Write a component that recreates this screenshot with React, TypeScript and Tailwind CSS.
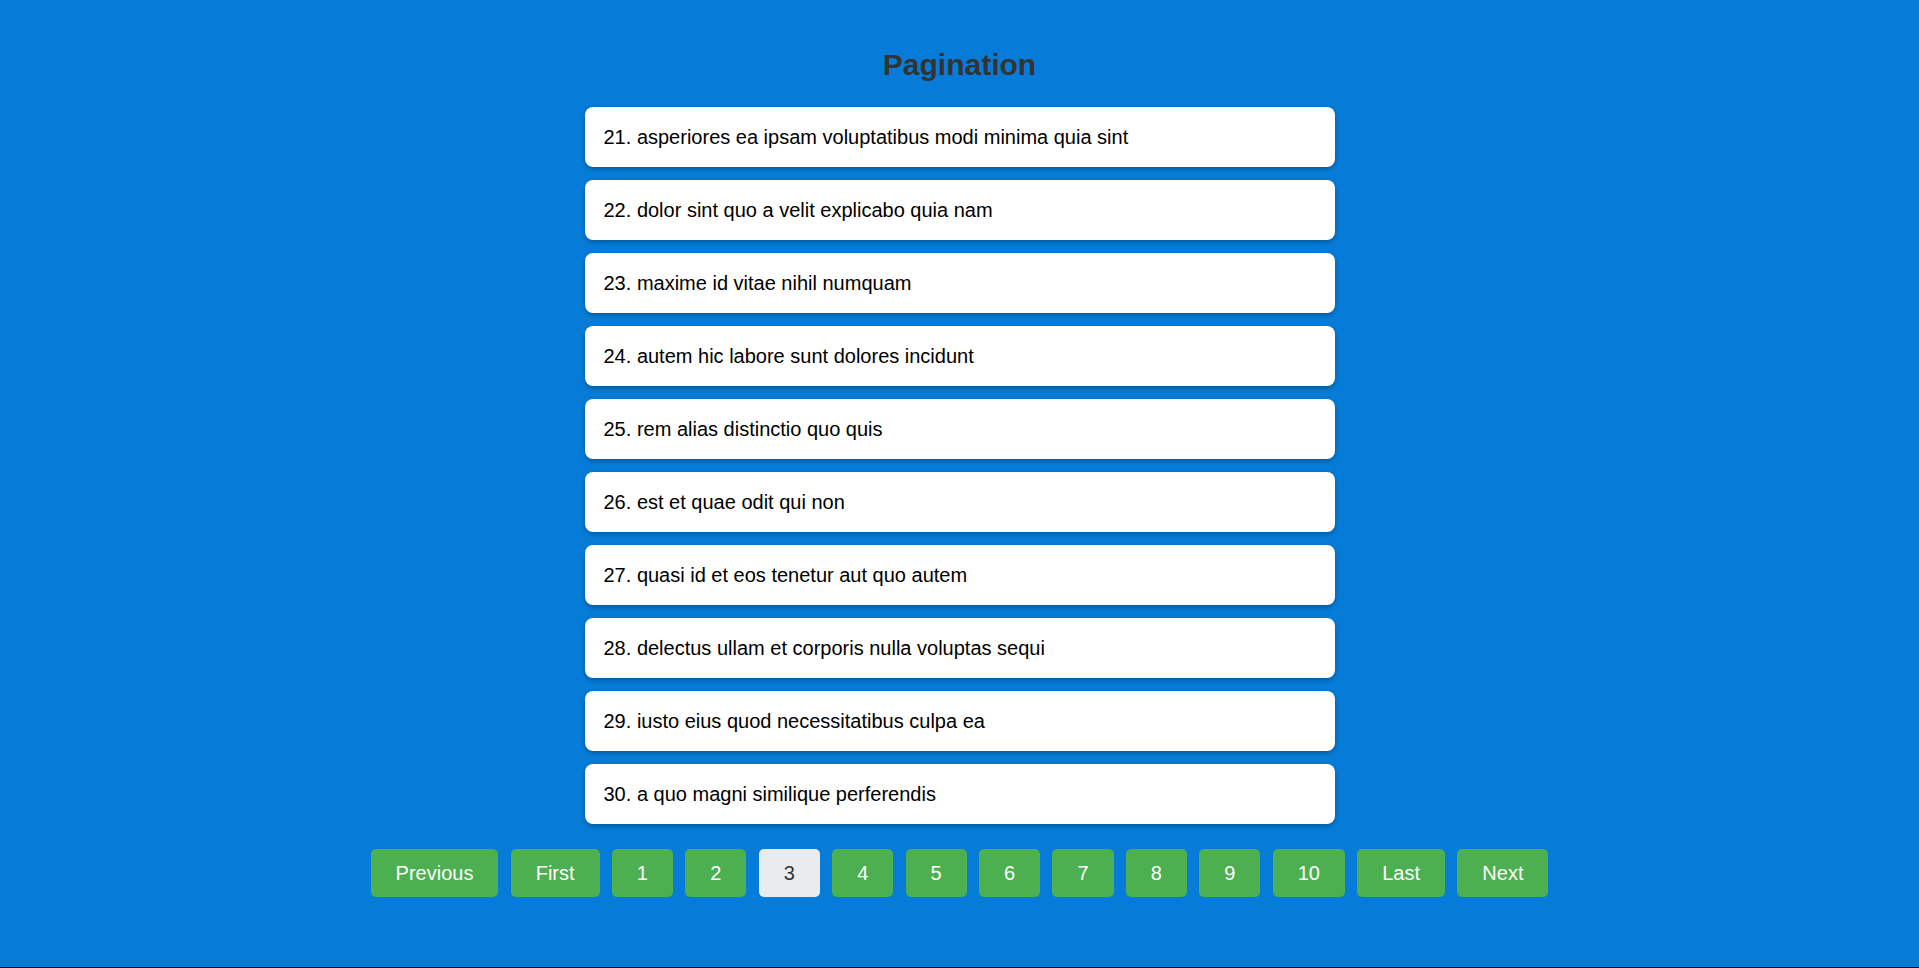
import { useState } from "react";

const posts = [
  "asperiores ea ipsam voluptatibus modi minima quia sint",
  "dolor sint quo a velit explicabo quia nam",
  "maxime id vitae nihil numquam",
  "autem hic labore sunt dolores incidunt",
  "rem alias distinctio quo quis",
  "est et quae odit qui non",
  "quasi id et eos tenetur aut quo autem",
  "delectus ullam et corporis nulla voluptas sequi",
  "iusto eius quod necessitatibus culpa ea",
  "a quo magni similique perferendis",
];

export default function App() {
  const [page] = useState(3);
  const pages = [1, 2, 3, 4, 5, 6, 7, 8, 9, 10];
  const btn =
    "rounded-[5px] px-[25px] py-3 text-[20px] leading-6 bg-[#4caf50] text-white";

  return (
    <div className="flex h-screen flex-col font-['Liberation_Sans',Arial,sans-serif]">
      <main className="flex flex-1 flex-col items-center bg-[#067cd8] pt-[48px]">
        <h1 className="mb-[25px] text-[30px] leading-[34px] font-bold text-[#333]">
          Pagination
        </h1>

        {/* Post list */}
        <ul className="flex w-[750px] flex-col gap-[13px]">
          {posts.map((title, i) => (
            <li
              key={i}
              className="rounded-lg bg-white pl-[19px] pr-[18px] py-[15px] text-[20px] leading-[30px] text-black shadow-[0_2px_5px_rgba(0,0,0,0.3)]"
            >
              {(page - 1) * 10 + i + 1}. {title}
            </li>
          ))}
        </ul>

        {/* Pagination buttons */}
        <nav className="mt-[25px] flex gap-[12.3px]">
          <button className={btn}>Previous</button>
          <button className={btn}>First</button>
          {pages.map((p) => (
            <button
              key={p}
              className={
                p === page
                  ? "rounded-[5px] px-[25px] py-3 text-[20px] leading-6 bg-[#e9ecef] text-[#333]"
                  : btn
              }
            >
              {p}
            </button>
          ))}
          <button className={btn}>Last</button>
          <button className={btn}>Next</button>
        </nav>
      </main>
      <div className="h-px bg-black" />
    </div>
  );
}
